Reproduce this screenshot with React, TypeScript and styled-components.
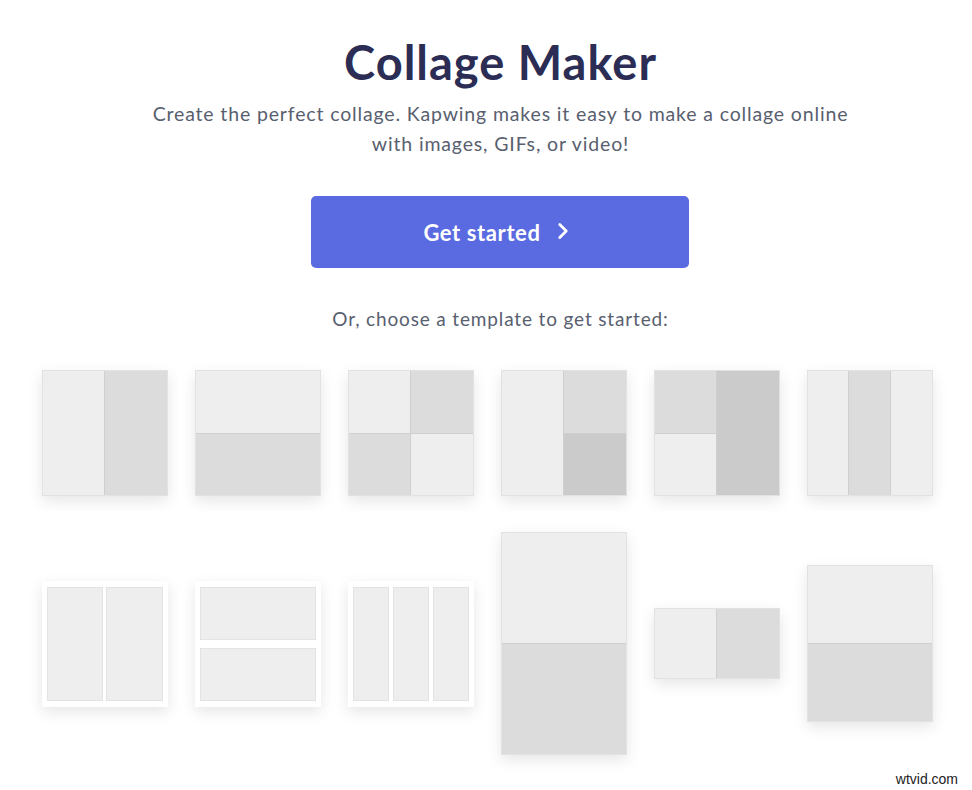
import React from 'react'
import styled, { createGlobalStyle } from 'styled-components'
import { ChevronRight } from 'lucide-react'

const GlobalStyle = createGlobalStyle`
  html, body {
    margin: 0;
    padding: 0;
    background: #ffffff;
    overflow: hidden;
  }
  body {
    font-family: Lato, "Open Sans", sans-serif;
  }
`

type Tone = 'light' | 'mid' | 'dark'

const tones: Record<Tone, string> = {
  light: '#eeeeee',
  mid: '#dcdcdc',
  dark: '#cbcbcb',
}

type Cell = { tone: Tone; area: string }

type Template = {
  w: number
  h: number
  cols: string
  rows: string
  areas: string
  cells: Cell[]
  framed?: boolean
  gap?: number
}

const topRow: Template[] = [
  {
    w: 126, h: 126, cols: '1fr 1fr', rows: '1fr', areas: '"a b"',
    cells: [{ tone: 'light', area: 'a' }, { tone: 'mid', area: 'b' }],
  },
  {
    w: 126, h: 126, cols: '1fr', rows: '1fr 1fr', areas: '"a" "b"',
    cells: [{ tone: 'light', area: 'a' }, { tone: 'mid', area: 'b' }],
  },
  {
    w: 126, h: 126, cols: '1fr 1fr', rows: '1fr 1fr', areas: '"a b" "c d"',
    cells: [
      { tone: 'light', area: 'a' },
      { tone: 'mid', area: 'b' },
      { tone: 'mid', area: 'c' },
      { tone: 'light', area: 'd' },
    ],
  },
  {
    w: 126, h: 126, cols: '1fr 1fr', rows: '1fr 1fr', areas: '"a b" "a c"',
    cells: [
      { tone: 'light', area: 'a' },
      { tone: 'mid', area: 'b' },
      { tone: 'dark', area: 'c' },
    ],
  },
  {
    w: 126, h: 126, cols: '1fr 1fr', rows: '1fr 1fr', areas: '"a c" "b c"',
    cells: [
      { tone: 'mid', area: 'a' },
      { tone: 'light', area: 'b' },
      { tone: 'dark', area: 'c' },
    ],
  },
  {
    w: 126, h: 126, cols: '1fr 1fr 1fr', rows: '1fr', areas: '"a b c"',
    cells: [
      { tone: 'light', area: 'a' },
      { tone: 'mid', area: 'b' },
      { tone: 'light', area: 'c' },
    ],
  },
]

const bottomRow: Template[] = [
  {
    w: 126, h: 126, cols: '1fr 1fr', rows: '1fr', areas: '"a b"', framed: true, gap: 3,
    cells: [{ tone: 'light', area: 'a' }, { tone: 'light', area: 'b' }],
  },
  {
    w: 126, h: 126, cols: '1fr', rows: '1fr 1fr', areas: '"a" "b"', framed: true, gap: 8,
    cells: [{ tone: 'light', area: 'a' }, { tone: 'light', area: 'b' }],
  },
  {
    w: 126, h: 126, cols: '1fr 1fr 1fr', rows: '1fr', areas: '"a b c"', framed: true, gap: 4,
    cells: [
      { tone: 'light', area: 'a' },
      { tone: 'light', area: 'b' },
      { tone: 'light', area: 'c' },
    ],
  },
  {
    w: 126, h: 223, cols: '1fr', rows: '1fr 1fr', areas: '"a" "b"',
    cells: [{ tone: 'light', area: 'a' }, { tone: 'mid', area: 'b' }],
  },
  {
    w: 126, h: 71, cols: '1fr 1fr', rows: '1fr', areas: '"a b"',
    cells: [{ tone: 'light', area: 'a' }, { tone: 'mid', area: 'b' }],
  },
  {
    w: 126, h: 157, cols: '1fr', rows: '1fr 1fr', areas: '"a" "b"',
    cells: [{ tone: 'light', area: 'a' }, { tone: 'mid', area: 'b' }],
  },
]

const App = () => {
  return (
    <Page>
      <GlobalStyle />
      <Header>
        <Title>Collage Maker</Title>
        <Subtitle>
          Create the perfect collage. Kapwing makes it easy to make a collage online
          <br />
          with images, GIFs, or video!
        </Subtitle>

        <StartButton>
          Get started
          <ChevronRight size={26} strokeWidth={2.6} />
        </StartButton>

        <Choose>Or, choose a template to get started:</Choose>
      </Header>

      <Grid>
        {topRow.map((t, i) => (
          <TemplateTile key={'t' + i} t={t} />
        ))}
      </Grid>
      <Grid $second>
        {bottomRow.map((t, i) => (
          <TemplateTile key={'b' + i} t={t} />
        ))}
      </Grid>

      <Watermark>wtvid.com</Watermark>
    </Page>
  )
}

const TemplateTile = ({ t }: { t: Template }) => (
  <Tile
    style={{
      width: t.w,
      height: t.h,
      gridTemplateColumns: t.cols,
      gridTemplateRows: t.rows,
      gridTemplateAreas: t.areas,
      gap: t.framed ? t.gap : 1,
    }}
    $framed={!!t.framed}
  >
    {t.cells.map((c, j) => (
      <Panel key={j} $tone={c.tone} $framed={!!t.framed} style={{ gridArea: c.area }} />
    ))}
  </Tile>
)

export default App

const Page = styled.div`
  position: relative;
  width: 972px;
  height: 790px;
  display: flex;
  flex-direction: column;
  align-items: center;
  overflow: hidden;
`

const Header = styled.div`
  display: flex;
  flex-direction: column;
  align-items: center;
  padding-left: 29px;
`

const Title = styled.h1`
  margin: 34px 0 0;
  font-size: 47px;
  line-height: 56px;
  font-weight: 700;
  color: #2b2d55;
  letter-spacing: 1px;
`

const Subtitle = styled.p`
  margin: 9px 0 0;
  font-size: 19.5px;
  line-height: 30px;
  text-align: center;
  color: #58606f;
  letter-spacing: 0.85px;
`

const StartButton = styled.button`
  margin-top: 37px;
  width: 378px;
  height: 72px;
  border: none;
  border-radius: 5px;
  background: #5a6ae0;
  color: #ffffff;
  font-family: Lato, sans-serif;
  font-size: 22px;
  font-weight: 700;
  letter-spacing: 0.6px;
  display: flex;
  align-items: center;
  justify-content: center;
  gap: 9px;
  padding-left: 4px;
  cursor: pointer;
  svg {
    margin-top: -3px;
  }
`

const Choose = styled.div`
  margin-top: 39px;
  font-size: 19px;
  line-height: 24px;
  color: #58606f;
  letter-spacing: 0.85px;
`

const Grid = styled.div<{ $second?: boolean }>`
  margin-top: ${(p) => (p.$second ? '36px' : '39px')};
  margin-left: 2px;
  display: grid;
  grid-template-columns: repeat(6, 126px);
  column-gap: 27px;
  align-items: center;
`

const Tile = styled.div<{ $framed: boolean }>`
  box-sizing: border-box;
  display: grid;
  background: ${(p) => (p.$framed ? '#ffffff' : '#cfcfcf')};
  padding: ${(p) => (p.$framed ? '6px 5px' : '0')};
  border: ${(p) => (p.$framed ? 'none' : '1px solid #e2e2e2')};
  box-shadow: 0 5px 14px rgba(0, 0, 0, 0.1);
`

const Panel = styled.div<{ $tone: Tone; $framed: boolean }>`
  box-sizing: border-box;
  background: ${(p) => tones[p.$tone]};
  border: ${(p) => (p.$framed ? '1px solid #e3e3e3' : 'none')};
`

const Watermark = styled.div`
  position: absolute;
  right: 14px;
  bottom: 3px;
  font-family: "Liberation Sans", Arial, sans-serif;
  font-size: 14px;
  color: #222222;
`
